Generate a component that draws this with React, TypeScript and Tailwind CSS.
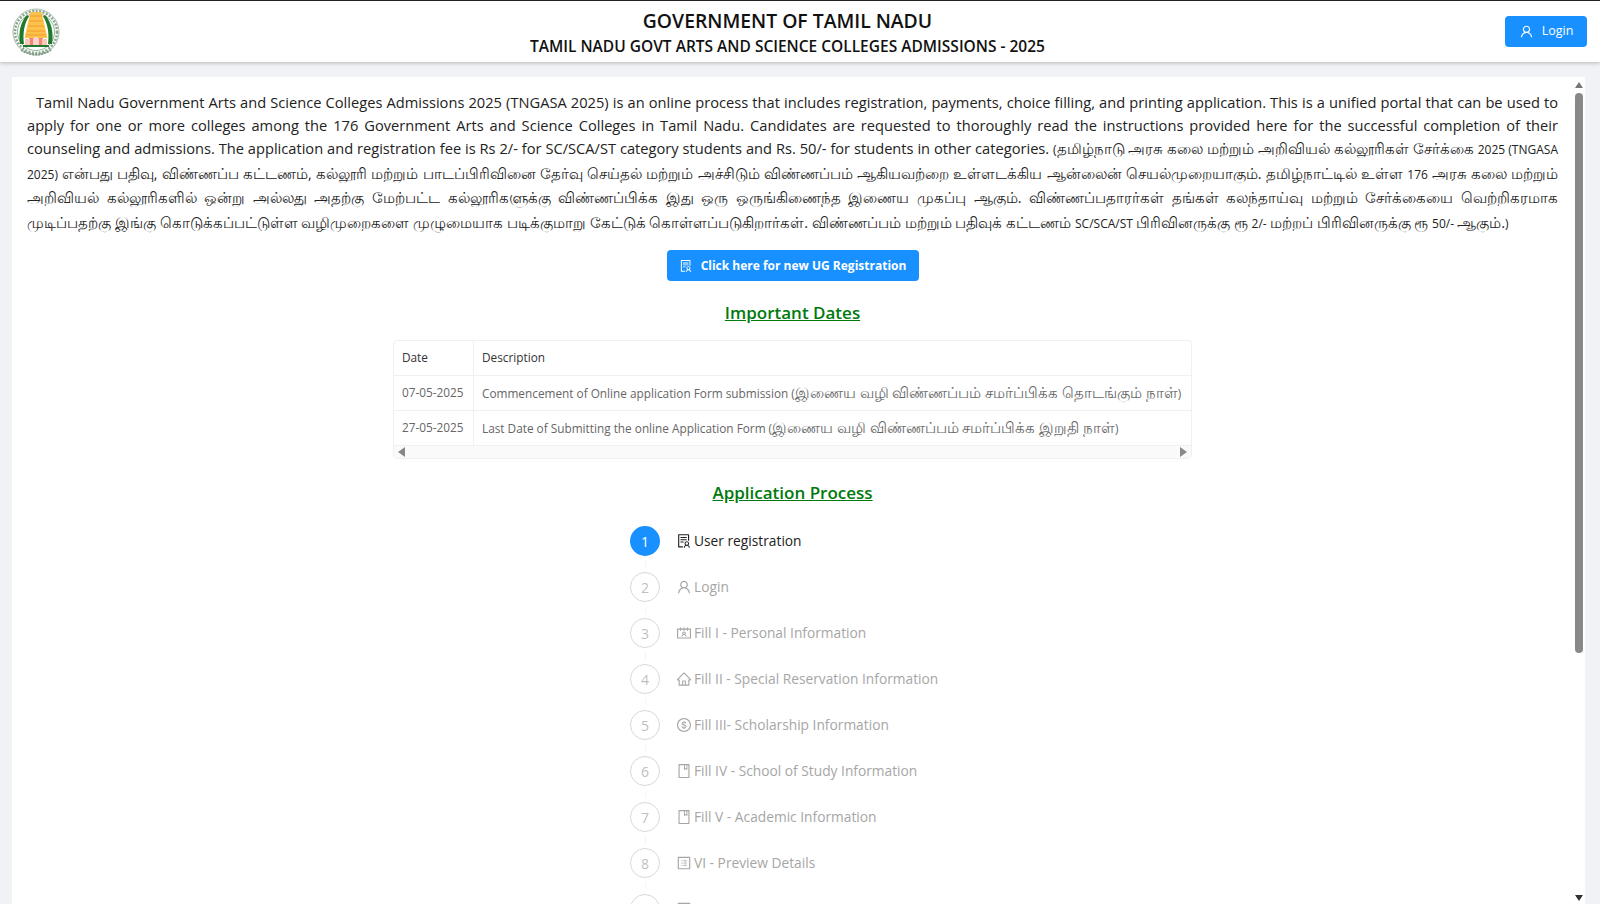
import React from 'react';
import {
    AiOutlineUser, AiOutlineSolution, AiOutlineContacts, AiOutlineHome,
    AiOutlineDollarCircle, AiOutlineBook, AiOutlineProfile
} from 'react-icons/ai';
import { IconType } from 'react-icons';

const FONT = "font-['Open_Sans','Noto_Sans',sans-serif]";

const steps: { label: string; icon: IconType }[] = [
    { label: 'User registration', icon: AiOutlineSolution },
    { label: 'Login', icon: AiOutlineUser },
    { label: 'Fill I - Personal Information', icon: AiOutlineContacts },
    { label: 'Fill II - Special Reservation Information', icon: AiOutlineHome },
    { label: 'Fill III- Scholarship Information', icon: AiOutlineDollarCircle },
    { label: 'Fill IV - School of Study Information', icon: AiOutlineBook },
    { label: 'Fill V - Academic Information', icon: AiOutlineBook },
    { label: 'VI - Preview Details', icon: AiOutlineProfile },
];

const dates = [
    { date: '07-05-2025', text: 'Commencement of Online application Form submission (இணைய வழி விண்ணப்பம் சமர்ப்பிக்க தொடங்கும் நாள்)' },
    { date: '27-05-2025', text: 'Last Date of Submitting the online Application Form (இணைய வழி விண்ணப்பம் சமர்ப்பிக்க இறுதி நாள்)' },
];

const tamilNote = '(தமிழ்நாடு அரசு கலை மற்றும் அறிவியல் கல்லூரிகள் சேர்க்கை 2025 (TNGASA 2025) என்பது பதிவு, விண்ணப்ப கட்டணம், கல்லூரி மற்றும் பாடப்பிரிவினை தேர்வு செய்தல் மற்றும் அச்சிடும் விண்ணப்பம் ஆகியவற்றை உள்ளடக்கிய ஆன்லைன் செயல்முறையாகும். தமிழ்நாட்டில் உள்ள 176 அரசு கலை மற்றும் அறிவியல் கல்லூரிகளில் ஒன்று அல்லது அதற்கு மேற்பட்ட கல்லூரிகளுக்கு விண்ணப்பிக்க இது ஒரு ஒருங்கிணைந்த இணைய முகப்பு ஆகும். விண்ணப்பதாரர்கள் தங்கள் கலந்தாய்வு மற்றும் சேர்க்கையை வெற்றிகரமாக முடிப்பதற்கு இங்கு கொடுக்கப்பட்டுள்ள வழிமுறைகளை முழுமையாக படிக்குமாறு கேட்டுக் கொள்ளப்படுகிறார்கள். விண்ணப்பம் மற்றும் பதிவுக் கட்டணம் SC/SCA/ST பிரிவினருக்கு ரூ 2/- மற்றப் பிரிவினருக்கு ரூ 50/- ஆகும்.)';

// the Tamil fallback font runs small next to the latin one, so tamil runs get their own size
const Mixed = ({ text, tamilClass }: { text: string; tamilClass: string }) => (
    <>
        {text.split(/([\u0B80-\u0BFF][\u0B80-\u0BFF\s.,]*)/).map((part, i) =>
            i % 2 === 1 ? <span key={i} className={tamilClass}>{part}</span> : part
        )}
    </>
);

const Emblem = () => (
    <svg viewBox="0 0 48 52" className="w-12 h-[52px]">
        <circle cx="24" cy="26" r="23" fill="#fbfcfa" stroke="#a9bdac" strokeWidth="1" />
        <circle cx="24" cy="26" r="21" fill="none" stroke="#8aa58f" strokeWidth="2.5" strokeDasharray="2 1.5" />
        <circle cx="24" cy="26" r="18.5" fill="#fff" stroke="#6f9f78" strokeWidth="0.75" />
        <path d="M8 38 C 6 26 9 15 15 9 L 17 10.5 C 12.5 17 10.5 27 12 38 Z" fill="#1f7a2e" />
        <path d="M40 38 C 42 26 39 15 33 9 L 31 10.5 C 35.5 17 37.5 27 36 38 Z" fill="#1f7a2e" />
        <path d="M18.5 6 H29.5 L35.5 32 H12.5 Z" fill="#fdc24a" />
        <path d="M18 10 H30 M17 15 H31 M16 20 H32 M15 25 H33 M14 29 H34" stroke="#f29a2e" strokeWidth="1" />
        <path d="M17 32 H31 V39 H17 Z" fill="#f3857a" />
        <path d="M13 33 H18 V39 H13 Z M30 33 H35 V39 H30 Z" fill="#f8c9b8" />
        <path d="M21 39 V34 a3 3 0 0 1 6 0 V39 Z" fill="#fbd3c8" />
        <path d="M11 39 H37 V41 H11 Z" fill="#1f7a2e" />
        <path d="M9 44 Q24 53 39 44" fill="none" stroke="#7d9a83" strokeWidth="2" strokeDasharray="2 1" />
    </svg>
);

const App = () => {
    return (
        <div className={`h-screen overflow-hidden flex flex-col bg-[#f0f2f5] border-t border-[#222] ${FONT}`}>
            {/* Header */}
            <header className="relative z-10 h-[61px] shrink-0 bg-white shadow-[0_1px_4px_rgba(0,0,0,0.25)] flex items-center justify-between pl-3 pr-[13px]">
                <Emblem />
                <div className="flex-1 text-center pl-[10px] text-[#111] pt-[2px]">
                    <div className="text-[19.35px] leading-[26px] font-semibold">GOVERNMENT OF TAMIL NADU</div>
                    <div className="text-[15.5px] leading-[24px] font-semibold">TAMIL NADU GOVT ARTS AND SCIENCE COLLEGES ADMISSIONS - 2025</div>
                </div>
                <button className="w-[82px] h-[31px] rounded bg-[#1890ff] text-white text-[12.5px] flex items-center justify-center gap-2">
                    <AiOutlineUser className="w-[15px] h-[15px]" />
                    Login
                </button>
            </header>

            {/* Page */}
            <main className="flex-1 min-h-0 pt-[15px] pl-3 pr-[15px]">
                <div className="relative h-full bg-white overflow-hidden pl-[15px] pr-[27px] pt-[14px]">
                    <p className="text-justify text-[14.65px] leading-[23px] text-[#222] indent-[9px]">
                        Tamil Nadu Government Arts and Science Colleges Admissions 2025 (TNGASA 2025) is an online process that includes registration, payments, choice filling, and printing application. This is a unified portal that can be used to apply for one or more colleges among the 176 Government Arts and Science Colleges in Tamil Nadu. Candidates are requested to thoroughly read the instructions provided here for the successful completion of their counseling and admissions. The application and registration fee is Rs 2/- for SC/SCA/ST category students and Rs. 50/- for students in other categories.{' '}
                        <span className="text-[12px] leading-[20px]">
                            <Mixed text={tamilNote} tamilClass="text-[14.5px] leading-[24.5px]" />
                        </span>
                    </p>

                    <div className="flex justify-center mt-[15px]">
                        <button className="w-[252px] h-[31px] rounded bg-[#1890ff] text-white text-[12px] font-bold flex items-center justify-center gap-2">
                            <AiOutlineSolution className="w-[14px] h-[14px]" />
                            Click here for new UG Registration
                        </button>
                    </div>

                    <h2 className="mt-[20px] text-center text-[17px] leading-6 font-semibold text-[#007a0c] underline">Important Dates</h2>

                    {/* Dates table */}
                    <div className="w-[799px] mx-auto mt-[15px] border border-[#f0f0f0] rounded-sm text-[11.8px] text-[#666]">
                        <div className="flex h-[35px] items-center border-b border-[#f0f0f0] text-[#333] font-medium">
                            <div className="w-[80px] shrink-0 px-2 self-stretch flex items-center border-r border-[#f0f0f0]">Date</div>
                            <div className="px-2">Description</div>
                        </div>
                        {dates.map((row) => (
                            <div key={row.date} className="flex h-[35px] items-center border-b border-[#f0f0f0] last:border-b-0">
                                <div className="w-[80px] shrink-0 px-2 self-stretch flex items-center border-r border-[#f0f0f0]">{row.date}</div>
                                <div className="px-2 whitespace-nowrap">
                                    <Mixed text={row.text} tamilClass="text-[14.5px]" />
                                </div>
                            </div>
                        ))}
                        <div className="h-[12px] bg-[#fafafa] flex items-center justify-between px-1 text-[#888]">
                            <svg viewBox="0 0 8 10" className="w-2 h-2.5"><path d="M7 0 V10 L0 5 Z" fill="currentColor" /></svg>
                            <svg viewBox="0 0 8 10" className="w-2 h-2.5"><path d="M1 0 V10 L8 5 Z" fill="currentColor" /></svg>
                        </div>
                    </div>

                    <h2 className="mt-[22px] text-center text-[17px] leading-6 font-semibold text-[#007a0c] underline">Application Process</h2>

                    {/* Steps */}
                    <div className="ml-[603px] mt-[21px] flex flex-col gap-4">
                        {steps.map((step, i) => (
                            <div key={step.label} className="relative flex items-center h-[30px] shrink-0">
                                <div className={`w-[30px] h-[30px] rounded-full flex items-center justify-center text-[14px] ${i === 0 ? 'bg-[#1890ff] text-white' : 'border border-[#d9d9d9] text-[#bfbfbf]'}`}>
                                    {i + 1}
                                </div>
                                <div className={`ml-4 flex items-center gap-[2px] text-[13.75px] ${i === 0 ? 'text-[#222]' : 'text-[#a6a6a6]'}`}>
                                    <step.icon className="w-[16px] h-[16px]" />
                                    {step.label}
                                </div>
                                <div className="absolute left-[15px] top-[34px] w-px h-[8px] bg-[#f5f5f5]" />
                            </div>
                        ))}
                        {/* next step, cut off by the fold */}
                        <div className="flex items-center h-[30px] shrink-0">
                            <div className="w-[30px] h-[30px] rounded-full border border-[#d9d9d9]" />
                            <div className="ml-4 text-[#a6a6a6]">
                                <AiOutlineProfile className="w-[16px] h-[16px]" />
                            </div>
                        </div>
                    </div>

                    {/* Scrollbar */}
                    <div className="absolute right-[2px] top-0 bottom-0 w-2 flex flex-col items-center">
                        <svg viewBox="0 0 8 6" className="w-2 h-1.5 mt-[5px] text-[#777]"><path d="M4 0 L8 6 H0 Z" fill="currentColor" /></svg>
                        <div className="w-2 h-[560px] mt-[5px] rounded-full bg-[#888]" />
                        <svg viewBox="0 0 8 6" className="w-2 h-1.5 mt-auto mb-[3px] text-[#333]"><path d="M0 0 H8 L4 6 Z" fill="currentColor" /></svg>
                    </div>
                </div>
            </main>
        </div>
    );
};

export default App;
